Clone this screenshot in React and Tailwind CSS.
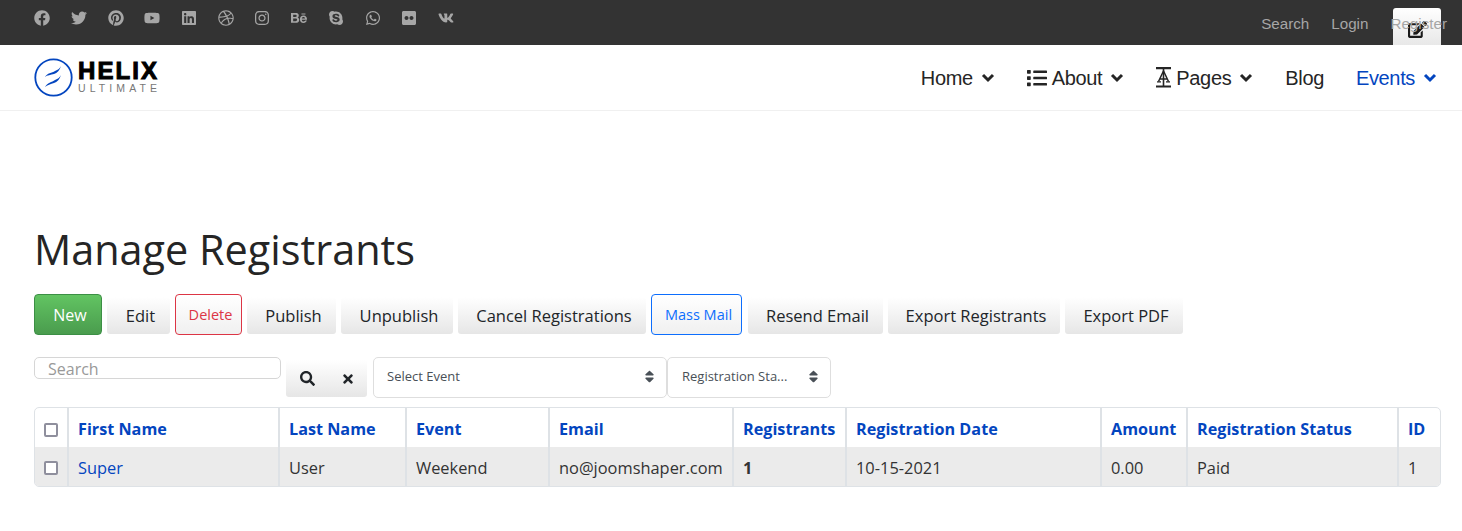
import { FaFacebook, FaTwitter, FaPinterest, FaYoutube, FaLinkedin, FaDribbble, FaInstagram, FaBehance, FaSkype, FaWhatsapp, FaFlickr, FaVk, FaList, FaEdit, FaSearch, FaTimes, FaSort } from 'react-icons/fa';

const socials = [FaFacebook, FaTwitter, FaPinterest, FaYoutube, FaLinkedin, FaDribbble, FaInstagram, FaBehance, FaSkype, FaWhatsapp, FaFlickr, FaVk];

const columns = [
    { label: '', width: 'w-[33px]' },
    { label: 'First Name', width: 'w-[211px]' },
    { label: 'Last Name', width: 'w-[127px]' },
    { label: 'Event', width: 'w-[143px]' },
    { label: 'Email', width: 'w-[184px]' },
    { label: 'Registrants', width: 'w-[113px]' },
    { label: 'Registration Date', width: 'w-[255px]' },
    { label: 'Amount', width: 'w-[86px]' },
    { label: 'Registration Status', width: 'w-[211px]' },
    { label: 'ID', width: 'w-[43px]' },
];

function GrayButton({ children, className = '' }) {
    return (
        <button className={`h-[37px] mt-[3px] pl-[4px] pt-[1px] rounded-[3px] bg-gradient-to-b from-white to-[#e6e6e6] text-[16.5px] text-[#212529] ${className}`}>
            {children}
        </button>
    );
}

function Chevron() {
    return (
        <svg className="ml-[8px]" width="14" height="10" viewBox="0 0 14 10" fill="none">
            <path d="M2 2L7 7L12 2" stroke="currentColor" strokeWidth="3" />
        </svg>
    );
}

function PagesIcon() {
    return (
        <svg className="mr-[5px]" width="15" height="21" viewBox="0 0 15 21" fill="none" stroke="currentColor">
            <path d="M0 1.2H15M0 19.5H15" strokeWidth="2.2" />
            <path d="M7.5 2V19" strokeWidth="1.6" />
            <path d="M2.5 14.5L7.5 4L12.5 14.5M4 12H11" strokeWidth="1.5" />
            <path d="M1 14.8H5M10 14.8H14" strokeWidth="1.2" />
        </svg>
    );
}

function NavItem({ icon, label, chevron, active }) {
    return (
        <a className={`flex items-center text-[20px] tracking-[-0.35px] ${active ? 'text-[#0345bf]' : 'text-[#252525]'}`}>
            {icon}
            <span>{label}</span>
            {chevron && <Chevron />}
        </a>
    );
}

function Checkbox() {
    return <span className="block w-[14px] h-[14px] rounded-[2px] border-2 border-[#8f8f9d] bg-white mx-auto" />;
}

export default function App() {
    return (
        <div className="relative min-h-[531px] bg-white font-['Open_Sans',sans-serif]">
            {/* Edit button, the register link lies over it */}
            <div className="absolute left-[1393px] top-[8px] w-[48px] h-[37px] rounded-t-[3px] bg-gradient-to-b from-white to-[#e8e8e8] flex items-center justify-center text-[#1a1a1a] text-[19px] pt-[6px]">
                <FaEdit />
            </div>

            {/* Top bar */}
            <div className="h-[45px] bg-[#333333] flex justify-between pl-[24px] pr-[15px] font-['Liberation_Sans',sans-serif]">
                <div className="flex pt-[10px] text-[16px] text-[#a6a6a6]">
                    {socials.map((Icon, i) => (
                        <span key={i} className="w-[36.7px] flex justify-center">
                            <Icon />
                        </span>
                    ))}
                </div>
                <div className="relative flex gap-[22px] pt-[14px] text-[15.2px] leading-[20px] text-[#a6a6a6]">
                    <span>Search</span>
                    <span>Login</span>
                    <span>Register</span>
                </div>
            </div>

            {/* Navigation */}
            <div className="h-[66px] border-b border-[#f0f0f0] flex items-center justify-between pl-[34px] pr-[25px] font-['Liberation_Sans',sans-serif]">
                <div className="flex items-center">
                    <svg width="39" height="39" viewBox="0 0 39 39" fill="none">
                        <circle cx="19.5" cy="19.5" r="18.2" stroke="#0345bf" strokeWidth="1.8" />
                        <path d="M11 19C13 15 18 15 21 13C24 12 26 10 27 8C26 12 23 15 20 16C17 17 13 17 11 19Z" fill="#0345bf" />
                        <path d="M11 29C13 25 18 24 21 22C24 21 26 19 27 17C26 21 23 24 20 25C17 26 13 27 11 29Z" fill="#0345bf" />
                    </svg>
                    <div className="ml-[5px] mt-[-2px] flex flex-col">
                        <span className="text-[24px] leading-[22px] font-bold text-black tracking-[2.1px] [-webkit-text-stroke:1px_black]">HELIX</span>
                        <span className="mt-[1px] text-[10.5px] leading-[11px] text-[#777] tracking-[4.1px] whitespace-nowrap">ULTIMATE</span>
                    </div>
                </div>
                <div className="flex items-center gap-[32px]">
                    <NavItem label="Home" chevron />
                    <NavItem icon={<FaList className="mr-[5px] text-[20px]" />} label="About" chevron />
                    <NavItem icon={<PagesIcon />} label="Pages" chevron />
                    <NavItem label="Blog" />
                    <NavItem label="Events" chevron active />
                </div>
            </div>

            <div className="px-[34px] pt-[112px]">
                <h1 className="text-[41.4px] leading-[52px] text-[#252525]">Manage Registrants</h1>

                {/* Toolbar */}
                <div className="flex items-start mt-[19px] gap-[5px]">
                    <button className="h-[41px] w-[68px] pl-[4px] pt-[1px] rounded-[4px] border border-[#3c8f45] bg-gradient-to-b from-[#62c462] to-[#4a9c4e] text-white text-[16px]">New</button>
                    <GrayButton className="w-[63px]">Edit</GrayButton>
                    <button className="h-[41px] w-[67px] pl-[4px] rounded-[4px] border border-[#dc3545] text-[#dc3545] bg-gradient-to-b from-white to-[#f0f0f0] text-[14.5px]">Delete</button>
                    <GrayButton className="w-[89px]">Publish</GrayButton>
                    <GrayButton className="w-[112px]">Unpublish</GrayButton>
                    <GrayButton className="w-[188px]">Cancel Registrations</GrayButton>
                    <button className="h-[41px] w-[91px] pl-[4px] rounded-[4px] border border-[#0d6efd] text-[#0d6efd] bg-gradient-to-b from-white to-[#f0f0f0] text-[14.5px]">Mass Mail</button>
                    <GrayButton className="w-[135px] ml-[1px]">Resend Email</GrayButton>
                    <GrayButton className="w-[172px]">Export Registrants</GrayButton>
                    <GrayButton className="w-[118px]">Export PDF</GrayButton>
                </div>

                {/* Filters */}
                <div className="flex items-start mt-[22px]">
                    <div className="w-[247px] h-[22px] rounded-[5px] border border-[#d6d6d6] pl-[13px] text-[16px] leading-[22px] text-[#999]">Search</div>
                    <div className="flex ml-[5px] mt-[3px] h-[37px]">
                        <button className="w-[43px] rounded-l-[3px] bg-gradient-to-b from-white to-[#e6e6e6] flex items-center justify-center text-[15px] text-[#212529]"><FaSearch /></button>
                        <button className="w-[38px] rounded-r-[3px] bg-gradient-to-b from-white to-[#e6e6e6] flex items-center justify-center text-[14px] text-[#212529]"><FaTimes /></button>
                    </div>
                    <div className="ml-[6px] w-[294px] h-[41px] rounded-[5px] border border-[#dedede] flex items-center justify-between pl-[13px] pr-[9px] pb-[2px] text-[13px] text-[#495057]">
                        <span>Select Event</span>
                        <FaSort className="text-[15px]" />
                    </div>
                    <div className="w-[164px] h-[41px] rounded-[5px] border border-[#dedede] flex items-center justify-between pl-[14px] pr-[9px] pb-[2px] text-[13px] text-[#495057]">
                        <span className="whitespace-nowrap">Registration Sta...</span>
                        <FaSort className="text-[15px]" />
                    </div>
                </div>

                {/* Table */}
                <div className="mt-[9px] w-[1407px] rounded-[5px] border border-[#dee2e6] overflow-hidden">
                    <table className="w-full table-fixed border-collapse">
                        <thead>
                            <tr className="h-[39px]">
                                {columns.map((col, i) => (
                                    <th key={i} className={`${col.width} px-[9px] pt-[4px] text-left text-[16.2px] font-bold text-[#0345bf] ${i > 0 ? 'border-l-2 border-[#dee2e6]' : ''}`}>
                                        {i === 0 ? <Checkbox /> : col.label}
                                    </th>
                                ))}
                            </tr>
                        </thead>
                        <tbody>
                            <tr className="h-[39px] bg-[#ebebeb] text-[16.4px] text-[#333]">
                                <td className="px-[9px] pt-[2px]"><Checkbox /></td>
                                <td className="px-[9px] pt-[4px] border-l-2 border-[#dee2e6] text-[#0345bf]">Super</td>
                                <td className="px-[9px] pt-[4px] border-l-2 border-[#dee2e6]">User</td>
                                <td className="px-[9px] pt-[4px] border-l-2 border-[#dee2e6]">Weekend</td>
                                <td className="px-[9px] pt-[4px] border-l-2 border-[#dee2e6] whitespace-nowrap">no@joomshaper.com</td>
                                <td className="px-[9px] pt-[4px] border-l-2 border-[#dee2e6] font-bold">1</td>
                                <td className="px-[9px] pt-[4px] border-l-2 border-[#dee2e6]">10-15-2021</td>
                                <td className="px-[9px] pt-[4px] border-l-2 border-[#dee2e6]">0.00</td>
                                <td className="px-[9px] pt-[4px] border-l-2 border-[#dee2e6]">Paid</td>
                                <td className="px-[9px] pt-[4px] border-l-2 border-[#dee2e6]">1</td>
                            </tr>
                        </tbody>
                    </table>
                </div>
            </div>
        </div>
    );
}
